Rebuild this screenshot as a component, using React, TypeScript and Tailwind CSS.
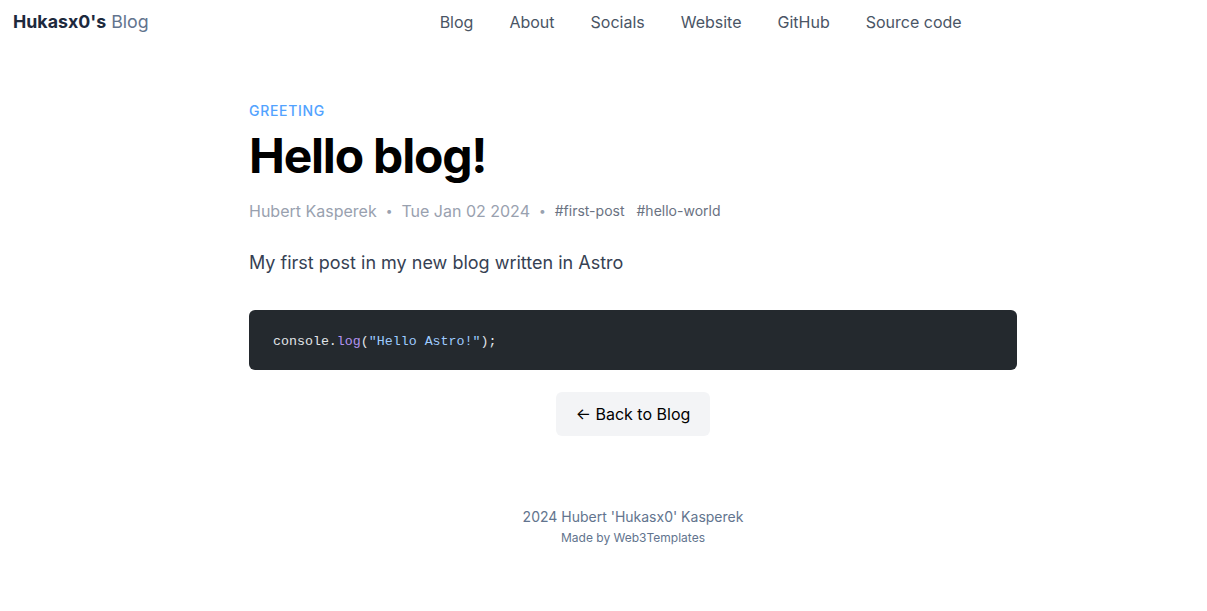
import React from 'react';

// Simple blog post page: header nav, post body, footer.

const navLinks = ['Blog', 'About', 'Socials', 'Website', 'GitHub', 'Source code'];

const Header: React.FC = () => (
    <header className="flex items-center h-[44px] pl-[13px]">
        <a href="#" className="text-[17.8px] leading-none text-slate-800">
            <span className="font-bold">Hukasx0's</span>{' '}
            <span className="text-slate-500">Blog</span>
        </a>
        <nav className="flex ml-[291px] gap-[36px]">
            {navLinks.map((l) => (
                <a key={l} href="#" className="text-base text-gray-600">
                    {l}
                </a>
            ))}
        </nav>
    </header>
);

const Post: React.FC = () => (
    <main className="pl-[59px]">
        <div className="mx-auto max-w-3xl">
            <div className="mt-[57px] text-sm font-medium uppercase tracking-wider text-blue-400 leading-5">
                Greeting
            </div>
            <h1 className="mt-[7px] text-5xl font-bold tracking-tight text-black leading-[56px]">
                Hello blog!
            </h1>
            <div className="mt-[15px] flex items-center text-gray-400 leading-6">
                <span>Hubert Kasperek</span>
                <span className="mx-[9px] text-xs">•</span>
                <span>Tue Jan 02 2024</span>
                <span className="mx-[9px] text-xs">•</span>
                <div className="flex gap-3 text-sm text-gray-500">
                    <span>#first-post</span>
                    <span>#hello-world</span>
                </div>
            </div>
            <p className="mt-[26px] text-lg text-gray-700 leading-7">
                My first post in my new blog written in Astro
            </p>
            <pre
                className="mt-[33px] rounded-md bg-[#24292e] px-6 pt-[3px] h-[60px] flex items-center text-[13.3px] text-[#e1e4e8]"
                style={{ fontFamily: '"DejaVu Sans Mono", monospace' }}
            >
                <code>
                    console.<span className="text-[#b392f0]">log</span>(
                    <span className="text-[#9ecbff]">"Hello Astro!"</span>);
                </code>
            </pre>
            <div className="mt-[22px] flex justify-center">
                <a href="#" className="rounded-md bg-gray-100 px-[20px] py-[10px] text-black leading-6">
                    ← Back to Blog
                </a>
            </div>
        </div>
    </main>
);

const Footer: React.FC = () => (
    <footer className="pl-[59px] mt-[71px] text-center">
        <p className="text-sm text-slate-500 leading-5">2024 Hubert 'Hukasx0' Kasperek</p>
        <p className="mt-[3px] text-xs text-slate-500 leading-4">Made by Web3Templates</p>
    </footer>
);

export default function App() {
    return (
        <div className="min-h-screen bg-white" style={{ fontFamily: 'Inter, "Noto Sans", sans-serif' }}>
            <Header />
            <Post />
            <Footer />
        </div>
    );
}
